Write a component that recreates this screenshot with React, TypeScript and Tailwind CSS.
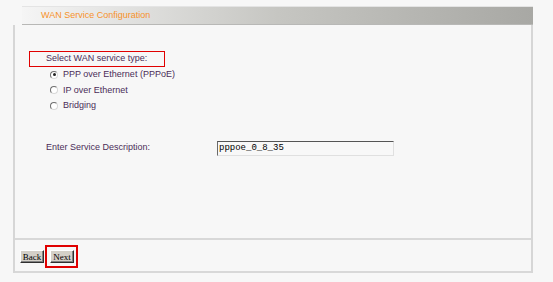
import React from 'react';

const textCls = "text-[9px] text-[#4b2d57] font-['Liberation_Sans',Arial,sans-serif]";

function Radio({ checked, label }: { checked?: boolean; label: string }) {
  return (
    <div className="flex items-center h-[15.5px]">
      <span className="w-[8px] h-[8px] ml-[1px] rounded-full bg-white border border-[#6e6e6e] border-b-[#d8d8d8] border-r-[#d8d8d8] flex items-center justify-center">
        {checked && <span className="w-[3px] h-[3px] rounded-full bg-[#222]" />}
      </span>
      <span className={`ml-[5px] ${textCls}`}>{label}</span>
    </div>
  );
}

function OldButton({ children }: { children: React.ReactNode }) {
  return (
    <button className="block w-[24px] h-[13px] p-0 bg-[#d4d0c8] border border-[#ffffff] border-b-[#303030] border-r-[#303030] shadow-[inset_-1px_-1px_0_#808080] text-[9px] leading-[10px] text-black font-['Liberation_Serif','Times_New_Roman',serif] text-center">
      {children}
    </button>
  );
}

export default function App() {
  return (
    <div className="w-[553px] h-[282px] bg-[#f7f7f7] pt-[6px] font-['Liberation_Sans',Arial,sans-serif]">
      {/* title bar */}
      <div className="ml-[22px] w-[511px] h-[19px] border-t border-[#e4e4e4] border-b border-b-[#b8b8b6] bg-gradient-to-r from-[#f5f5f5] via-[#c6c6c2] to-[#a8a8a4] flex items-center pl-[19px]">
        <span className="text-[9px] text-[#f7922a]">WAN Service Configuration</span>
      </div>

      <div className="ml-[13px] w-[520px] border-x-2 border-[#d6d6d6]">
        {/* form */}
        <div className="h-[215px] border-b-2 border-[#d8d8d8] pt-[26px] pl-[14px]">
          <div className={`w-[136px] h-[16px] border border-[#e00000] pl-[16px] flex items-center ${textCls}`}>
            Select WAN service type:
          </div>
          <div className="ml-[20px]">
            <Radio checked label="PPP over Ethernet (PPPoE)" />
            <Radio label="IP over Ethernet" />
            <Radio label="Bridging" />
          </div>
          <div className="flex items-center mt-[27px] ml-[17px]">
            <span className={`w-[171px] ${textCls}`}>Enter Service Description:</span>
            <input
              defaultValue="pppoe_0_8_35"
              className="w-[177px] h-[15px] bg-[#f8f8f8] border border-[#9a9a9a] border-t-[#555] border-l-[#6a6a6a] border-b-[#e0e0e0] border-r-[#e0e0e0] pl-[1px] text-[9px] text-black font-['Liberation_Mono','Courier_New',monospace] outline-none"
            />
          </div>
        </div>

        {/* buttons */}
        <div className="h-[33px] border-b-2 border-[#d8d8d8] flex items-start pt-[5px] pl-[5px]">
          <div className="flex mt-[5px]">
            <OldButton>Back</OldButton>
          </div>
          <div className="ml-[1px] border-2 border-[#e00000] pt-[3px] pb-[3px] pl-[3px] pr-[2px] flex">
            <OldButton>Next</OldButton>
          </div>
        </div>
      </div>
    </div>
  );
}
